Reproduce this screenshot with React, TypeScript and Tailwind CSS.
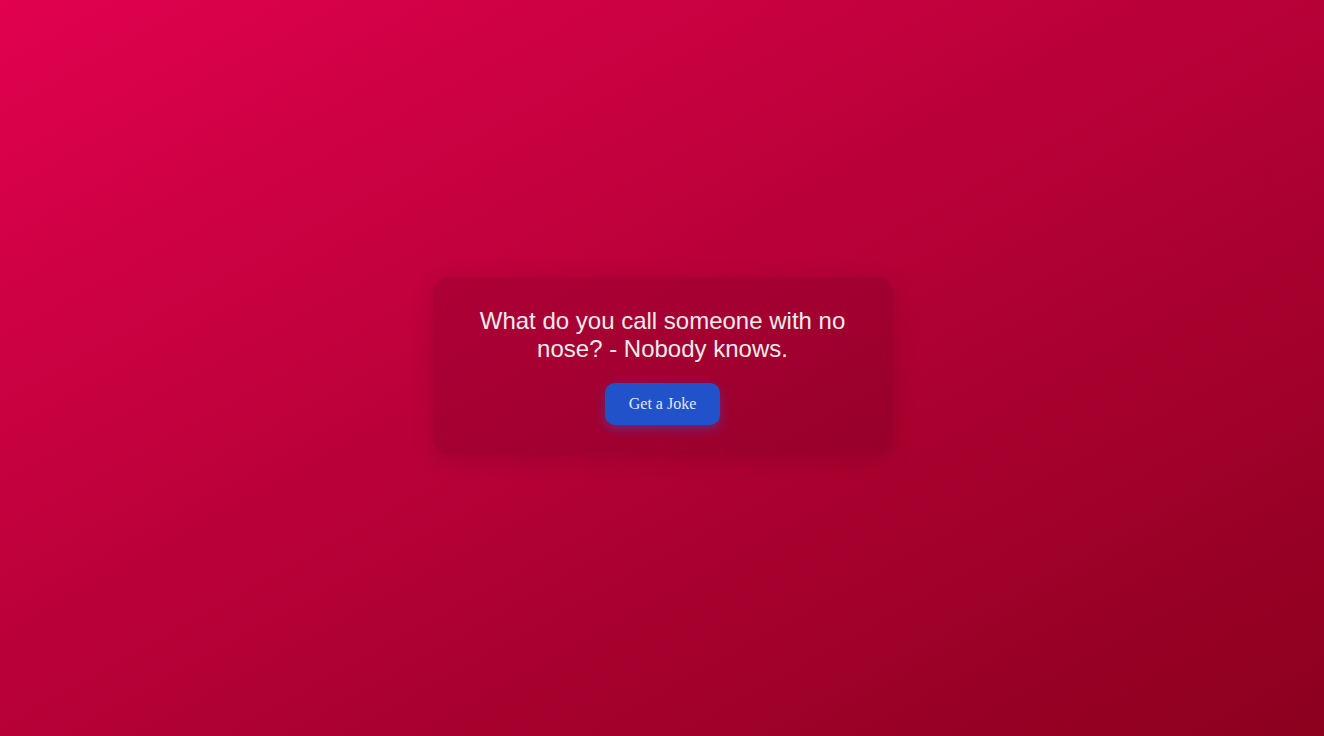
export default function App() {
  return (
    <div className="min-h-screen flex items-center justify-center bg-gradient-to-br from-[#e1014f] to-[#8c001e] font-['Liberation_Serif',serif]">
      <div className="w-[460px] mb-[4px] ml-[1px] rounded-2xl bg-black/10 shadow-[0_4px_24px_rgba(0,0,0,0.12)] px-8 py-[30px] flex flex-col items-center">
        <p className="text-center text-[24px] leading-[28px] text-[#ececec] font-['Liberation_Sans',Arial,sans-serif] mb-5">
          What do you call someone with no nose? - Nobody knows.
        </p>
        <button className="bg-[#2152c9] text-[#e6e6f0] text-[16px] leading-6 px-6 py-[9px] rounded-[10px] shadow-[0_4px_12px_rgba(59,80,220,0.45)]">
          Get a Joke
        </button>
      </div>
    </div>
  );
}
